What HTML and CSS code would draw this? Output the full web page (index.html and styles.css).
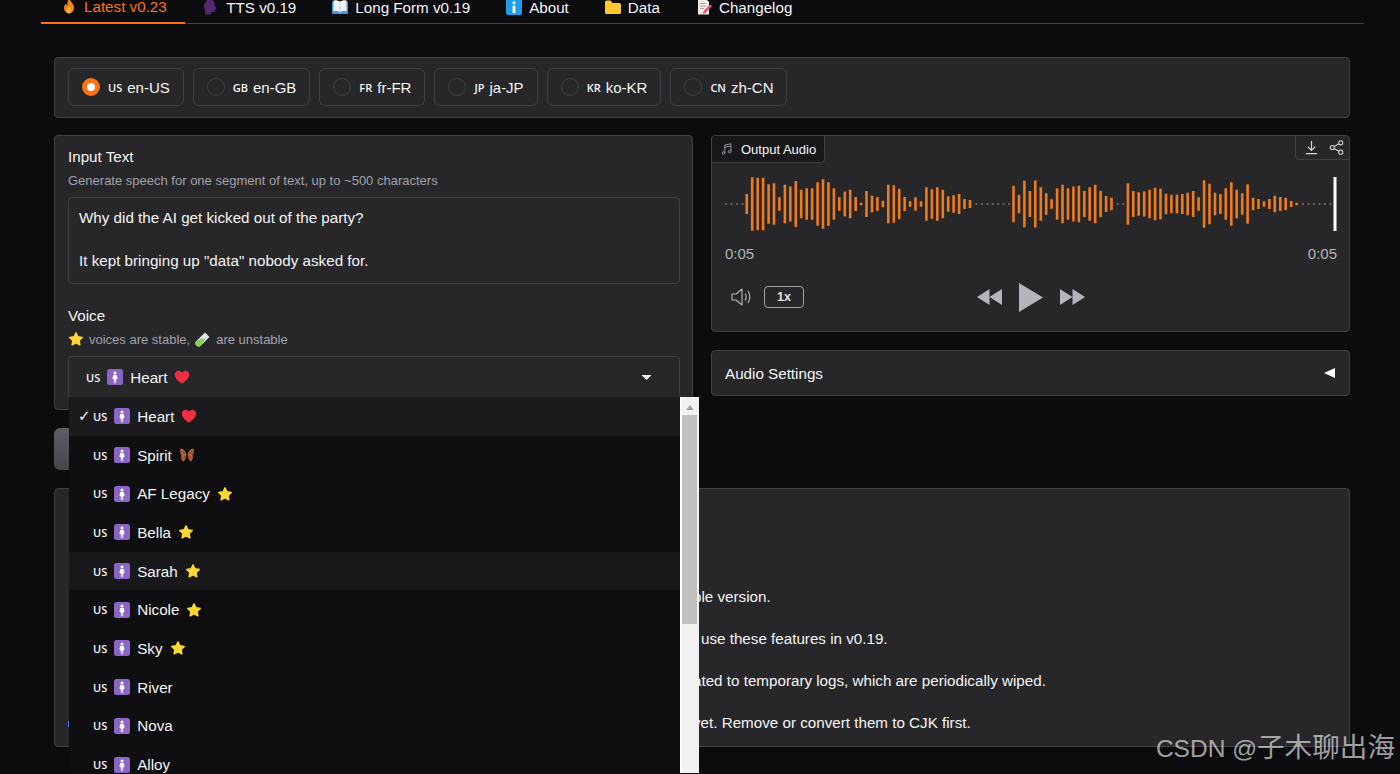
FILE: index.html
```html
<!DOCTYPE html>
<html lang="en">
<head>
    <meta charset="UTF-8">
    <meta name="viewport" content="width=device-width, initial-scale=1.0">
    <title>Kokoro TTS</title>
    <link rel="stylesheet" href="styles.css">
</head>
<body>
    <!-- shared emoji drawings -->
    <svg class="defs" aria-hidden="true">
        <symbol id="e-person" viewBox="0 0 16 16">
            <rect width="16" height="16" rx="2.5" fill="#8b64c4"/>
            <circle cx="8" cy="3.9" r="1.5" fill="#fff"/>
            <path d="M6.3 6h3.4l.9 3.6-1.1.3-.3 1.3v3H8.4v-3h-.8v3H6.8v-3l-.3-1.3-1.1-.3z" fill="#fff"/>
        </symbol>
        <symbol id="e-heart" viewBox="0 0 16 16">
            <path d="M8 14.8C3 11.2 .8 8.6 .8 5.6.8 3.2 2.7 1.7 4.6 1.7c1.4 0 2.6.8 3.4 2.1.8-1.3 2-2.1 3.4-2.1 1.9 0 3.8 1.5 3.8 3.9 0 3-2.2 5.6-7.2 9.2z" fill="#ee2f3f"/>
        </symbol>
        <symbol id="e-star" viewBox="0 0 16 16">
            <path d="M8 1.8l1.9 4 4.4.6-3.2 3.1.8 4.4L8 11.8l-3.9 2.1.8-4.4-3.2-3.1 4.4-.6z" fill="#fdd835" stroke="#fdd835" stroke-width="1.4" stroke-linejoin="round"/>
        </symbol>
        <symbol id="e-butterfly" viewBox="0 0 16 16">
            <path d="M7.4 7.5C6.8 4.5 4.4 1.6 1.6 1.4.6 3 1 6.4 2.6 8 1.6 10 2.2 13.4 4 14.4c1.6-.4 3-2.600 3.400-6.900zM8.600 7.500C9.200 4.500 11.600 1.600 14.400 1.400c1 1.600.6 5-1 6.600 1 2 .4 5.400-1.400 6.400-1.600-.4-3-2.600-3.400-6.900z" fill="#b8603c"/>
            <path d="M2.500 4l3.500 3M13.500 4L10 7M3.500 11.500L6.500 9M12.500 11.500L9.500 9" stroke="#5c3a2c" stroke-width=".9"/>
        </symbol>
        <symbol id="e-tube" viewBox="0 0 16 16">
            <path d="M10 1.500l4.500 4.500-8.600 8.600a3.100 3.100 0 0 1-4.500-4.500z" fill="#dfe7ea"/>
            <path d="M6.700 7.200l3.400 1.100-4.200 6.300a3.100 3.100 0 0 1-4.500-4.500z" fill="#8ad04f"/>
        </symbol>
    </svg>

    <div class="app">
        <nav class="tabs">
            <a class="tab active">
                <svg class="tab-icon" viewBox="0 0 16 16"><path d="M8.300 .5c.5 2.600 4.700 5 4.700 9.300 0 3.300-2.200 5.700-5 5.700s-5-2.300-5-5.400c0-2.200 1.100-3.500 2-4.700.2 1.200.7 1.900 1.400 2.200-.3-2.700.4-5.300 1.900-7.100z" fill="#f5811f"/><path d="M8 8.500c.3 1.300 2.300 2.400 2.300 4.200 0 1.500-1 2.500-2.300 2.500s-2.300-1-2.300-2.400c0-1.700 1.700-2.700 2.300-4.300z" fill="#fbbf45"/></svg>
                Latest v0.23
            </a>
            <a class="tab">
                <svg class="tab-icon" viewBox="0 0 16 16"><path d="M6.500 .5c3.200 0 5 2 5.200 4.500l.1 2 1.800 2.800-1.500.6.300 2.200-1.600.5L8 13v2.500H1.800c.6-2 .5-3.500-.2-5C.700 8.500 1 5.600 2.500 3.300 3.500 1.500 4.800.5 6.500.5z" fill="#53296f"/></svg>
                TTS v0.19
            </a>
            <a class="tab">
                <svg class="tab-icon" viewBox="0 0 16 16"><rect y="2.500" width="16" height="12.500" rx="1" fill="#3f9be0"/><path d="M1.500 1.500C4 1 6.500 1.500 8 2.800v10.700C6.500 12.300 4 11.800 1.500 12.300zM14.500 1.500C12 1 9.500 1.500 8 2.800v10.700c1.500-1.200 4-1.700 6.500-1.200z" fill="#eef3f7"/><path d="M8 2.800v10.700" stroke="#b8c4ce" stroke-width=".7"/></svg>
                Long Form v0.19
            </a>
            <a class="tab">
                <svg class="tab-icon" viewBox="0 0 16 16"><rect width="16" height="16" rx="2" fill="#1d9ce8"/><circle cx="8" cy="3.800" r="1.500" fill="#fff"/><rect x="6.600" y="6.500" width="2.800" height="7.500" fill="#fff"/></svg>
                About
            </a>
            <a class="tab">
                <svg class="tab-icon" viewBox="0 0 16 16"><path d="M0 3a1.500 1.500 0 0 1 1.500-1.500h4L7.500 4H14.500A1.500 1.500 0 0 1 16 5.500v8a1.500 1.500 0 0 1-1.500 1.500h-13A1.500 1.500 0 0 1 0 13.500z" fill="#fdc72f"/></svg>
                Data
            </a>
            <a class="tab">
                <svg class="tab-icon" viewBox="0 0 16 16"><path d="M2 .5h8.500L13 3v12.500H2z" fill="#f1ece4"/><path d="M4 4.500h6M4 7h6M4 9.500h4" stroke="#8f9aa3" stroke-width=".8"/><path d="M14 5.500l2 1.800-6.500 6.700-2.700.9.800-2.800z" fill="#e2527a"/></svg>
                Changelog
            </a>
        </nav>

        <main class="content">
            <section class="panel lang-panel">
                <label class="chip"><span class="radio checked"></span><span class="flag">US</span>en-US</label>
                <label class="chip"><span class="radio"></span><span class="flag">GB</span>en-GB</label>
                <label class="chip"><span class="radio"></span><span class="flag">FR</span>fr-FR</label>
                <label class="chip"><span class="radio"></span><span class="flag">JP</span>ja-JP</label>
                <label class="chip"><span class="radio"></span><span class="flag">KR</span>ko-KR</label>
                <label class="chip"><span class="radio"></span><span class="flag">CN</span>zh-CN</label>
            </section>

            <div class="columns">
                <div class="column">
                    <section class="panel form-panel">
                        <div class="field-label">Input Text</div>
                        <div class="field-info">Generate speech for one segment of text, up to ~500 characters</div>
                        <div class="textbox">Why did the AI get kicked out of the party?<br><br>It kept bringing up "data" nobody asked for.</div>

                        <div class="field-label voice-label">Voice</div>
                        <div class="field-info">
                            <svg class="emoji"><use href="#e-star"/></svg> voices are stable,
                            <svg class="emoji"><use href="#e-tube"/></svg> are unstable
                        </div>
                        <div class="select">
                            <span class="flag">US</span>
                            <svg class="emoji"><use href="#e-person"/></svg>
                            <span>Heart</span>
                            <svg class="emoji"><use href="#e-heart"/></svg>
                            <svg class="caret" viewBox="0 0 10 5"><path d="M0 0h10L5 5z" fill="#fff"/></svg>

                            <div class="dropdown">
                                <ul class="options">
                                    <li class="selected"><span class="check">✓</span><span class="flag">US</span><svg class="emoji"><use href="#e-person"/></svg><span>Heart</span><svg class="emoji"><use href="#e-heart"/></svg></li>
                                    <li><span class="check"></span><span class="flag">US</span><svg class="emoji"><use href="#e-person"/></svg><span>Spirit</span><svg class="emoji"><use href="#e-butterfly"/></svg></li>
                                    <li><span class="check"></span><span class="flag">US</span><svg class="emoji"><use href="#e-person"/></svg><span>AF Legacy</span><svg class="emoji"><use href="#e-star"/></svg></li>
                                    <li><span class="check"></span><span class="flag">US</span><svg class="emoji"><use href="#e-person"/></svg><span>Bella</span><svg class="emoji"><use href="#e-star"/></svg></li>
                                    <li class="hovered"><span class="check"></span><span class="flag">US</span><svg class="emoji"><use href="#e-person"/></svg><span>Sarah</span><svg class="emoji"><use href="#e-star"/></svg></li>
                                    <li><span class="check"></span><span class="flag">US</span><svg class="emoji"><use href="#e-person"/></svg><span>Nicole</span><svg class="emoji"><use href="#e-star"/></svg></li>
                                    <li><span class="check"></span><span class="flag">US</span><svg class="emoji"><use href="#e-person"/></svg><span>Sky</span><svg class="emoji"><use href="#e-star"/></svg></li>
                                    <li><span class="check"></span><span class="flag">US</span><svg class="emoji"><use href="#e-person"/></svg><span>River</span></li>
                                    <li><span class="check"></span><span class="flag">US</span><svg class="emoji"><use href="#e-person"/></svg><span>Nova</span></li>
                                    <li><span class="check"></span><span class="flag">US</span><svg class="emoji"><use href="#e-person"/></svg><span>Alloy</span></li>
                                </ul>
                                <div class="scrollbar">
                                    <div class="scroll-arrow"></div>
                                    <div class="scroll-thumb"></div>
                                </div>
                            </div>
                        </div>
                    </section>
                    <div class="generate-btn"></div>
                </div>

                <div class="column">
                    <section class="panel audio-panel">
                        <div class="audio-top">
                            <div class="block-label">
                                <svg viewBox="0 0 16 16" class="note-icon"><path d="M5.500 12.500V3.500l7-1.500v9M5.500 6l7-1.500" fill="none" stroke="#a1a1aa"/><circle cx="4" cy="12.500" r="1.500" fill="none" stroke="#a1a1aa"/><circle cx="11" cy="11" r="1.500" fill="none" stroke="#a1a1aa"/></svg>
                                Output Audio
                            </div>
                            <div class="audio-actions">
                                <svg viewBox="0 0 16 16"><path d="M8 1v9.500M4 7l4 4 4-4M2 14.500h12" fill="none" stroke="#d4d4d8" stroke-width="1.300"/></svg>
                                <svg viewBox="0 0 16 16"><circle cx="3.500" cy="8" r="2.200" fill="none" stroke="#d4d4d8" stroke-width="1.100"/><circle cx="12.500" cy="3" r="2.200" fill="none" stroke="#d4d4d8" stroke-width="1.100"/><circle cx="12.500" cy="13" r="2.200" fill="none" stroke="#d4d4d8" stroke-width="1.100"/><path d="M5.500 7l5-3M5.500 9l5 3" stroke="#d4d4d8" stroke-width="1.100"/></svg>
                            </div>
                        </div>

                        <svg class="wave" viewBox="0 -30 612 60">
                            <path class="wave-dots" d="M0 0h2M5.400 0h2M10.900 0h2M16.300 0h2M250.400 0h2M255.900 0h2M261.300 0h2M266.800 0h2M272.200 0h2M277.600 0h2M283.100 0h2M392 0h2M397.400 0h2M577 0h2M582.500 0h2M587.900 0h2M593.400 0h2M598.800 0h2M604.300 0h2"/>
                            <path class="wave-bars" d="M21.800-10V10M27.200-26.700V26.700M32.700-26.300V26.300M38.100-26.300V26.300M43.600-19.700V19.700M49-20.800V20.800M54.400-6.700V6.700M59.900-19.200V19.200M65.300-17.500V17.500M70.800-23V23M76.200-14.200V14.200M81.700-15.800V15.800M87.100-15.800V15.800M92.600-21.700V21.700M98-24.700V24.700M103.400-21.700V21.700M108.900-15.800V15.800M114.300-6.700V6.700M119.800-12.500V12.500M125.200-14.200V14.200M130.700-7V7M136.100-1.300V1.300M141.500-13V13M147-8.300V8.300M152.400-7V7M157.900-3.300V3.300M163.300-19.200V19.200M168.800-18.700V18.700M174.200-15.300V15.300M179.700-7V7M185.100-2.700V2.700M190.500-6.700V6.700M196-2.700V2.700M201.400-16.700V16.700M206.900-14.700V14.700M212.300-16.700V16.700M217.800-14.200V14.200M223.200-7.700V7.700M228.600-8.700V8.700M234.100-10V10M239.500-5V5M245-4V4M288.500-18.300V18.300M294-9.200V9.200M299.400-23.300V23.300M304.900-13V13M310.300-23.500V23.500M315.800-16.700V16.700M321.200-10.800V10.800M326.600-4.700V4.700M332.100-15.800V15.800M337.500-19.200V19.200M343-15.800V15.800M348.400-17.500V17.500M353.900-18.300V18.300M359.300-13V13M364.700-16.700V16.700M370.200-19.200V19.200M375.600-13V13M381.100-8V8M386.500-6.300V6.300M402.900-20.800V20.800M408.300-13V13M413.700-11.700V11.700M419.200-12.500V12.500M424.600-14.200V14.200M430.100-16.300V16.300M435.500-15.300V15.300M441-10.300V10.300M446.400-9.200V9.200M451.900-9.200V9.200M457.300-10V10M462.700-11.300V11.300M468.200-13V13M473.600-6.700V6.700M479.100-23.700V23.700M484.500-20.300V20.300M490-11.300V11.300M495.400-10V10M500.800-15.800V15.800M506.300-21.700V21.700M511.700-14.200V14.200M517.200-10.800V10.800M522.600-19.700V19.700M528.100-6.300V6.300M533.500-5V5M539-2.700V2.700M544.400-5V5M549.800-8.300V8.300M555.300-7V7M560.700-6.300V6.300M566.200-3V3M571.600-1.300V1.300"/>
                            <path class="wave-head" d="M610-27V27"/>
                        </svg>

                        <div class="times"><span>0:05</span><span>0:05</span></div>

                        <div class="controls">
                            <div class="controls-left">
                                <svg class="volume" viewBox="0 0 22 18"><path d="M1 6h4l6-5v16l-6-5H1z" fill="none" stroke="#b4b4bb" stroke-width="1.100" stroke-linejoin="round"/><path d="M14 5.500c1.400 2 1.400 5 0 7M17 3c2.400 3.400 2.400 8.600 0 12" fill="none" stroke="#b4b4bb" stroke-width="1.100"/></svg>
                                <span class="speed">1x</span>
                            </div>
                            <div class="controls-mid">
                                <svg class="skip" viewBox="0 0 25 16"><path d="M12.500 0v16L0 8zM25 0v16L12.500 8z" fill="#b4b4bb"/></svg>
                                <svg class="play" viewBox="0 0 24 29"><path d="M0 0l24 14.500L0 29z" fill="#b4b4bb"/></svg>
                                <svg class="skip" viewBox="0 0 25 16"><path d="M0 0v16l12.500-8zM12.500 0v16L25 8z" fill="#b4b4bb"/></svg>
                            </div>
                            <div></div>
                        </div>
                    </section>

                    <section class="panel settings-panel">
                        <span>Audio Settings</span>
                        <svg class="arrow" viewBox="0 0 11 10"><path d="M11 0v10L0 5z" fill="#fff"/></svg>
                    </section>
                </div>
            </div>

            <section class="panel notes-panel">
                <span class="link-tick"></span>
                <p>ble version.</p>
                <p class="note-use">use these features in v0.19.</p>
                <p>ated to temporary logs, which are periodically wiped.</p>
                <p>yet. Remove or convert them to CJK first.</p>
            </section>
        </main>
    </div>

    <div class="watermark">CSDN @<span class="watermark-cjk">子木聊出海</span></div>
</body>
</html>
```

FILE: styles.css
```css
* { box-sizing: border-box; }

html, body { height: 774px; overflow: hidden; }

body {
    margin: 0;
    position: relative;
    background-color: #0c0c0f;
    color: #f4f4f5;
    font-family: "Liberation Sans", Arial, sans-serif;
    font-size: 15.2px;
}

.defs { display: none; }

.app { padding: 0 36px 0 41px; }

/* tabs, cut by the top of the window */
.tabs {
    display: flex;
    height: 36px;
    margin-top: -12px;
    border-bottom: 1px solid #3f3f46;
}

.tab {
    display: flex;
    align-items: center;
    gap: 7px;
    height: 36px;
    padding: 2px 17.5px 0 18.5px;
    color: #f4f4f5;
    white-space: nowrap;
}

.tab.active {
    color: #f97316;
    border-bottom: 2px solid #f97316;
    padding: 2px 18px 0 20px;
}

.tab-icon { width: 16px; height: 16px; flex: none; }

.content { padding: 33px 14px 0 13px; }

.panel {
    background-color: #27272a;
    border: 1px solid #3f3f46;
    border-radius: 4px;
}

/* language chooser */
.lang-panel {
    display: flex;
    gap: 9px;
    height: 61px;
    padding: 10px 13px;
}

.chip {
    display: flex;
    align-items: center;
    height: 38px;
    padding: 0 13px;
    border: 1px solid #3f3f46;
    border-radius: 6px;
    font-size: 15px;
}

.radio {
    width: 18px;
    height: 18px;
    margin-right: 8px;
    border: 1px solid #3f3f46;
    border-radius: 50%;
}

.radio.checked {
    border: 5.5px solid #f97316;
    background-color: #fff;
}

.flag {
    margin-right: 5px;
    font-family: "Open Sans", sans-serif;
    font-size: 11px;
    font-weight: 600;
}

.columns {
    display: grid;
    grid-template-columns: minmax(0, 1fr) minmax(0, 1fr);
    gap: 18px;
    margin-top: 17px;
}

/* left column */
.form-panel {
    height: 275px;
    padding: 11px 12px 0 13px;
}

.field-label { height: 20px; line-height: 20px; }

.voice-label { margin-top: 22px; }

.field-info {
    display: flex;
    align-items: center;
    gap: 5px;
    height: 16px;
    margin-top: 5px;
    color: #a1a1aa;
    font-size: 13px;
}

.textbox {
    height: 87px;
    margin-top: 9px;
    padding: 9px 10px;
    border: 1px solid #3f3f46;
    border-radius: 4px;
    line-height: 21.5px;
}

.emoji { width: 16px; height: 16px; flex: none; }

.select {
    position: relative;
    display: flex;
    align-items: center;
    gap: 7px;
    height: 41px;
    margin-top: 9px;
    padding: 0 27px 0 17px;
    border: 1px solid #3f3f46;
    border-bottom: 0;
    border-radius: 4px;
}

.select .flag { margin-right: 0; }

.caret {
    width: 11px;
    height: 5px;
    margin-left: auto;
}

.dropdown {
    position: absolute;
    top: 40px;
    left: 0;
    display: flex;
    width: 630px;
    height: 376px;
    overflow: hidden;
    z-index: 2;
}

.options {
    flex: 1;
    margin: 0;
    padding: 0;
    list-style: none;
    background-color: #0f0f11;
}

.options li {
    display: flex;
    align-items: center;
    gap: 7px;
    height: 38.7px;
    padding-left: 9px;
}

.options li.selected { background-color: #1b1b1e; }
.options li.hovered { background-color: #18181b; }

.options .flag { margin-right: 0; }

.check { width: 9px; margin-right: -1px; font-family: "DejaVu Sans", sans-serif; font-size: 15px; }

.scrollbar {
    width: 19px;
    border: 2px solid #f1f1f1;
    border-left-color: #fff;
    background-color: #f1f1f1;
}

.scroll-arrow {
    width: 0;
    height: 0;
    margin: 6px auto 5px;
    border: 4px solid transparent;
    border-top: 0;
    border-bottom: 5px solid #a3a3a3;
}

.scroll-thumb { height: 209px; background-color: #c1c1c1; }

.generate-btn {
    height: 42px;
    margin-top: 18px;
    border-radius: 6px;
    background: linear-gradient(to bottom, #5c5c64, #46464d);
}

/* right column */
.audio-panel { height: 197px; padding: 0 12px 0 13px; }

.audio-top {
    display: flex;
    justify-content: space-between;
    height: 27px;
    margin: 0 -12px 0 -13px;
}

.block-label {
    display: flex;
    align-items: center;
    gap: 7px;
    padding: 0 8px;
    background-color: #18181b;
    border-right: 1px solid #3f3f46;
    border-bottom: 1px solid #3f3f46;
    border-radius: 4px 0 4px 0;
    font-size: 13px;
}

.note-icon { width: 14px; height: 14px; }

.audio-actions {
    display: flex;
    align-items: center;
    gap: 10px;
    height: 24px;
    padding: 0 5px 0 8px;
    border-left: 1px solid #3f3f46;
    border-bottom: 1px solid #3f3f46;
    border-radius: 0 4px 0 4px;
}

.audio-actions svg { width: 15px; height: 15px; }

.wave { display: block; width: 612px; height: 60px; margin-top: 11px; }
.wave-bars { fill: none; stroke: #ee7b1e; stroke-width: 2.6; }
.wave-dots { fill: none; stroke: #b8987a; stroke-width: 1; }
.wave-head { fill: none; stroke: #fff; stroke-width: 3; }

.times {
    display: flex;
    justify-content: space-between;
    margin-top: 11px;
    color: #b4b4bb;
    font-size: 15px;
    line-height: 18px;
}

.controls {
    display: grid;
    grid-template-columns: 1fr auto 1fr;
    align-items: center;
    height: 32px;
    margin-top: 18px;
}

.controls-left {
    display: flex;
    align-items: center;
    gap: 11px;
    padding-left: 6px;
}

.volume { width: 22px; height: 18px; }

.speed {
    width: 40px;
    height: 22px;
    border: 1px solid #a1a1aa;
    border-radius: 4px;
    color: #e4e4e7;
    font-size: 12.500px;
    font-weight: bold;
    line-height: 20px;
    text-align: center;
}

.controls-mid {
    display: flex;
    align-items: center;
    gap: 17px;
}

.skip { width: 25px; height: 16px; }
.play { width: 24px; height: 29px; }

.settings-panel {
    display: flex;
    align-items: center;
    justify-content: space-between;
    height: 46px;
    margin-top: 18px;
    padding: 0 14px 0 13px;
}

.arrow { width: 11px; height: 10px; }

/* notes panel, mostly behind the open dropdown */
.notes-panel {
    position: relative;
    height: 259px;
    margin-top: 18px;
    padding: 99px 0 0 638px;
}

.notes-panel p {
    height: 42px;
    margin: 0;
    line-height: 18px;
    white-space: nowrap;
}

.notes-panel .note-use { padding-left: 8px; }

.link-tick {
    position: absolute;
    left: 13px;
    top: 232px;
    width: 2px;
    height: 6px;
    background-color: #3b82f6;
}

.watermark {
    position: absolute;
    right: 5px;
    bottom: 10px;
    color: rgba(255, 255, 255, 0.62);
    font-size: 24.500px;
    line-height: 30px;
    white-space: nowrap;
    z-index: 3;
}

.watermark-cjk {
    font-family: "Noto Sans CJK SC", sans-serif;
    font-size: 27.600px;
}
```
